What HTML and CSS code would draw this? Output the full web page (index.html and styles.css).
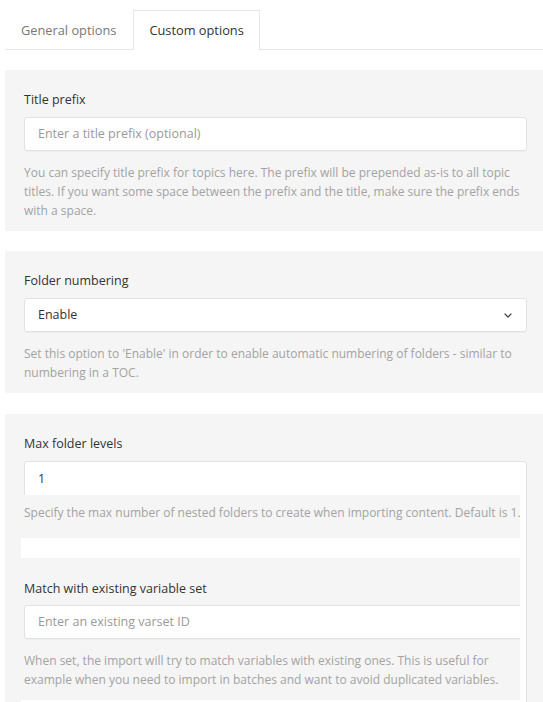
FILE: index.html
```html
<!DOCTYPE html>
<html>
<head>
<meta charset="utf-8">
<link rel="stylesheet" href="styles.css">
</head>
<body>
<div class="tabs">
  <div class="tab">General options</div>
  <div class="tab active">Custom options</div>
</div>

<div class="panel">
  <div class="label">Title prefix</div>
  <div class="field placeholder">Enter a title prefix (optional)</div>
  <div class="help">You can specify title prefix for topics here. The prefix will be prepended as-is to all topic titles. If you want some space between the prefix and the title, make sure the prefix ends with a space.</div>
</div>

<div class="panel">
  <div class="label">Folder numbering</div>
  <div class="field select"><span>Enable</span>
    <svg class="chev" width="8" height="5" viewBox="0 0 8 5"><path d="M1 1 L4 4 L7 1" fill="none" stroke="#444" stroke-width="1.2" stroke-linecap="round" stroke-linejoin="round"/></svg>
  </div>
  <div class="help">Set this option to 'Enable' in order to enable automatic numbering of folders - similar to numbering in a TOC.</div>
</div>

<div class="panel last">
  <div class="label">Max folder levels</div>
  <div class="box">
    <div class="box-value">1</div>
    <div class="inner">
      <div class="inner-help">Specify the max number of nested folders to create when importing content. Default is 1.</div>
      <div class="band"></div>
      <div class="inner-section">
        <div class="label">Match with existing variable set</div>
        <div class="field wide placeholder">Enter an existing varset ID</div>
        <div class="help">When set, the import will try to match variables with existing ones. This is useful for example when you need to import in batches and want to avoid duplicated variables.</div>
      </div>
      <div class="band"></div>
    </div>
  </div>
</div>
</body>
</html>
```

FILE: styles.css
```css
html, body {
  margin: 0;
  padding: 0;
  background: #fff;
  overflow: hidden;
}
body {
  font-family: "Open Sans", "Noto Sans", sans-serif;
  font-size: 12.5px;
  line-height: 20px;
  color: #333;
  width: 543px;
  height: 702px;
}
.tabs {
  display: flex;
  margin: 10px 0 0 5px;
  border-bottom: 1px solid #e6e6e6;
}
.tab {
  padding: 9px 16px;
  border: 1px solid transparent;
  border-bottom: none;
  color: #777;
  font-size: 12.8px;
  margin-bottom: -1px;
}
.tab:first-child {
  border-left: none;
}
.tab.active {
  color: #333;
  background: #fff;
  border-color: #e6e6e6;
  padding: 9px 15px 10px;
}
.panel {
  background: #f5f5f5;
  margin: 20px 0 0 5px;
  padding: 20px 16px 11px 19px;
  border-radius: 2px 0 0 2px;
}
.panel.last {
  margin-top: 21px;
  padding-bottom: 0;
  height: 269px;
  overflow: hidden;
}
.label {
  margin-bottom: 7px;
}
.field {
  height: 32px;
  background: #fff;
  border: 1px solid #e2e2e2;
  border-radius: 3px;
  box-shadow: 0 1px 1px rgba(0,0,0,0.03);
  padding: 0 13px;
  line-height: 32px;
}
.placeholder {
  color: #9a9a9a;
}
.select {
  display: flex;
  align-items: center;
  justify-content: space-between;
  padding-right: 14px;
}
.chev {
  display: block;
}
.help {
  margin-top: 12px;
  font-size: 12px;
  line-height: 19px;
  color: #a3a3a3;
}
.box {
  background: #fff;
  border: 1px solid #e2e2e2;
  border-radius: 3px;
  height: 260px;
}
.box-value {
  height: 33px;
  line-height: 33px;
  padding: 0 13px;
}
.inner {
  margin: 0 6px 0 -4px;
  overflow: hidden;
}
.inner-help {
  background: #f5f5f5;
  padding: 8px 0 16px 3px;
  font-size: 12px;
  line-height: 19px;
  color: #a3a3a3;
  white-space: nowrap;
}
.band {
  height: 20px;
  background: #fff;
}
.inner-section {
  background: #f5f5f5;
  padding: 21px 0 11px 3px;
}
.inner-section .label {
  margin-bottom: 6px;
}
.field.wide {
  width: 540px;
}
```
